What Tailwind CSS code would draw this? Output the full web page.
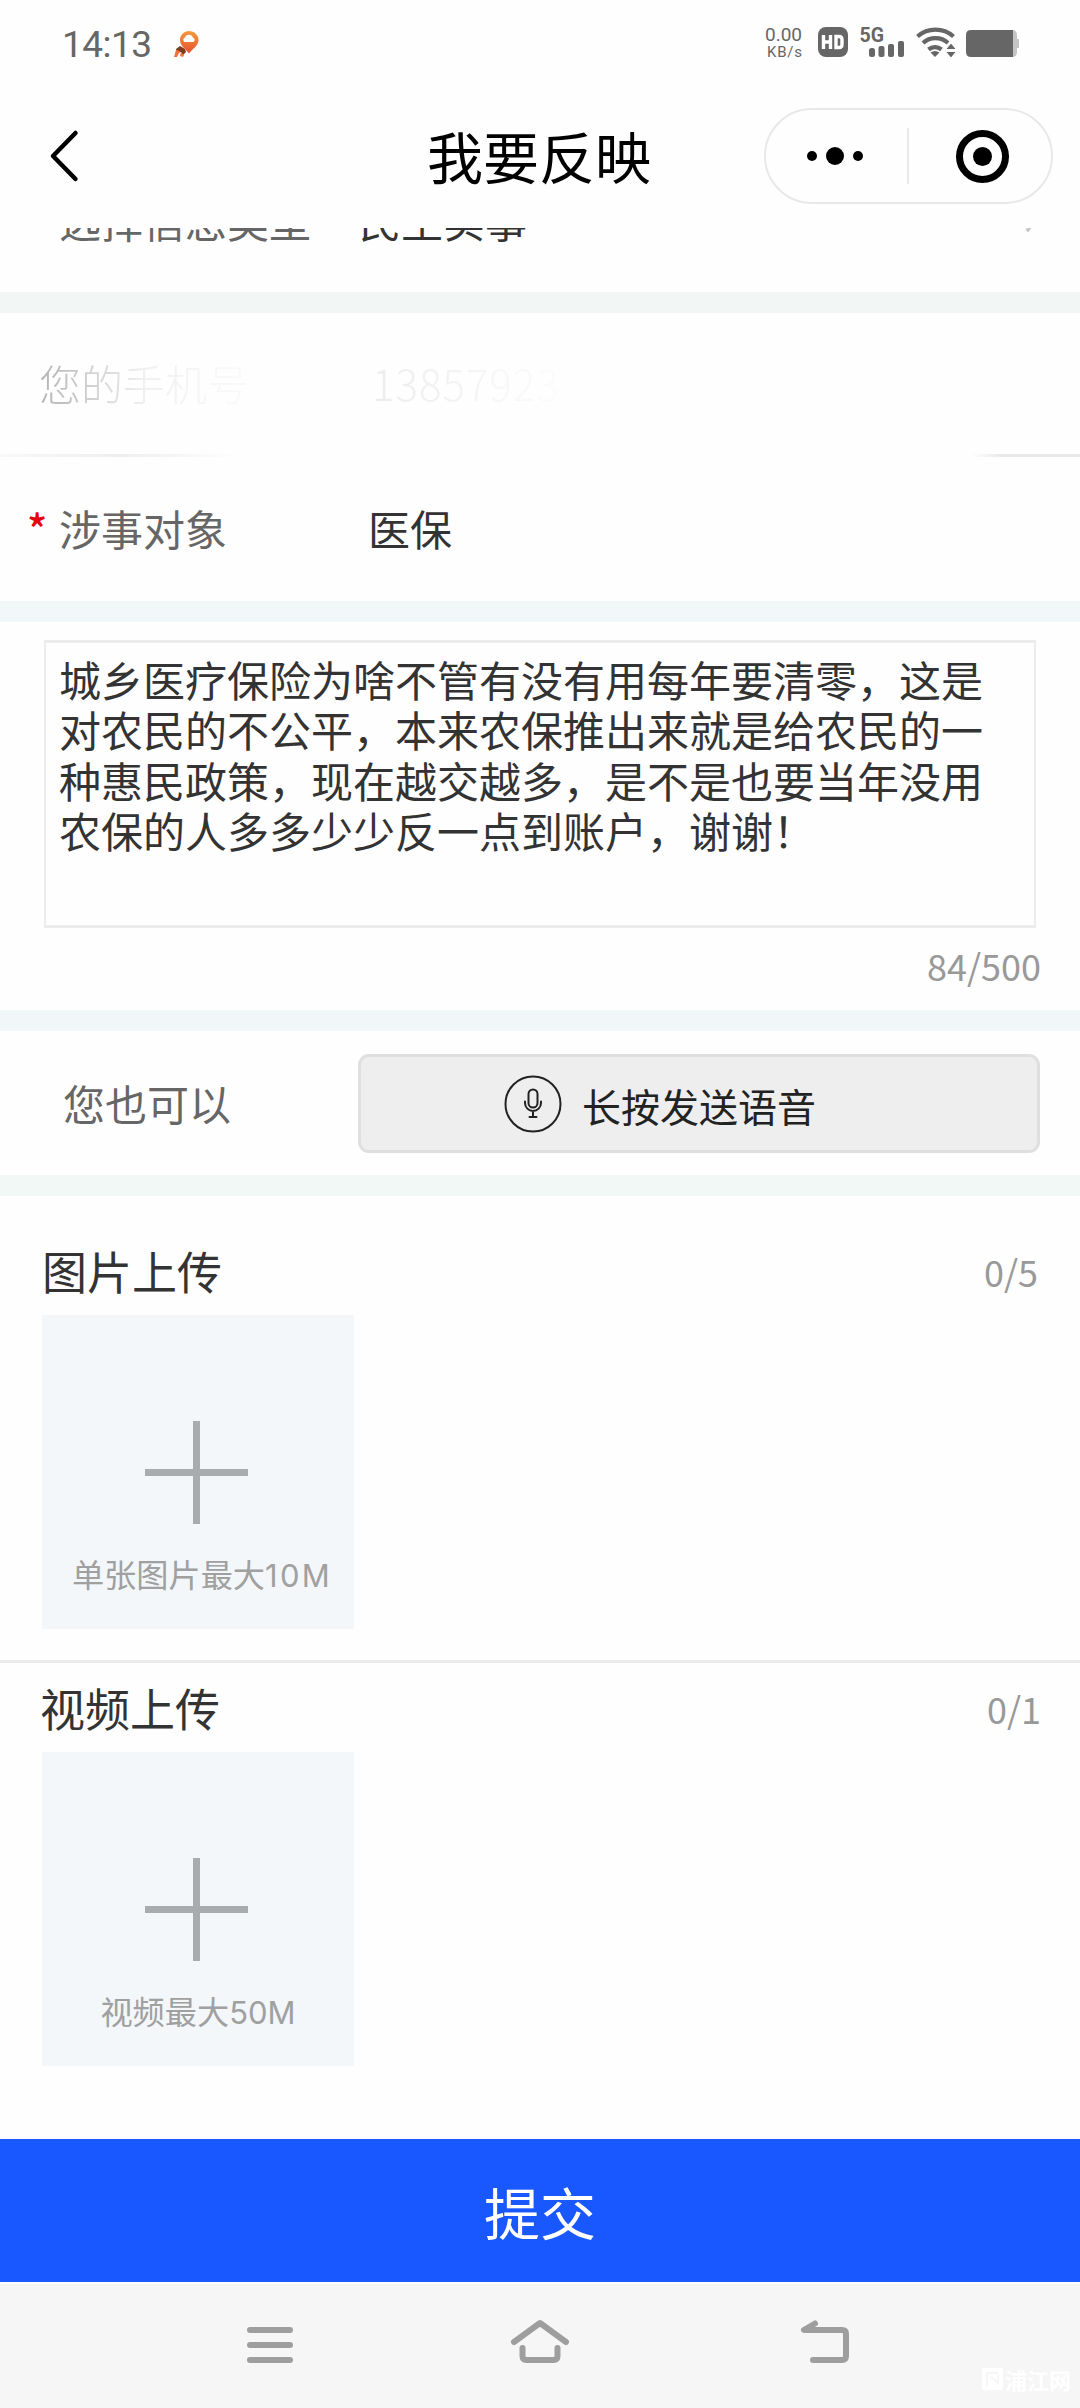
<!DOCTYPE html>
<html lang="zh-CN">
<head>
<meta charset="utf-8">
<title>我要反映</title>
<script src="https://cdn.jsdelivr.net/npm/@tailwindcss/browser@4"></script>
</head>
<body class="w-[1080px] h-[2408px] overflow-hidden bg-[#fefefe] font-['Noto_Sans_CJK_SC',sans-serif] text-[42px] leading-[50px] text-[#333]">
<div class="flex flex-col h-full">

  <!-- status bar -->
  <div class="h-[84px] shrink-0 flex items-start justify-between pl-[62px] pr-[59px] text-[#666]">
    <div class="flex pt-[23px]">
      <span class="font-[Roboto,sans-serif] text-[37px] leading-[44px] w-[110px] tracking-[-0.5px]">14:13</span>
      <svg class="mt-[5px]" width="30" height="34" viewBox="172 28 30 34">
        <defs><linearGradient id="pin" x1="0" y1="0" x2="0" y2="1"><stop offset="0" stop-color="#f59a3c"/><stop offset="1" stop-color="#e5502f"/></linearGradient></defs>
        <path d="M189 31c5.300 0 9.500 4 9.500 9 0 6-6 8.500-9.500 13.500-3.500-5-9-7.500-9-13.500 0-5 4-9 9-9z" fill="url(#pin)"/>
        <path d="M184.500 42a2.500 2.500 0 0 1 .5-4.500 4.200 4.200 0 0 1 8 .2 2.300 2.300 0 0 1 .4 4.300z" fill="#fff"/>
        <path d="M176 49l4-3 5 3 1 3-3 3-2-3-4 1z" fill="#7d3a1c"/>
        <path d="M174 57l2-7 4 1-3 6zM180 56l1-4 3 3-1 2z" fill="#f0723a"/>
      </svg>
    </div>
    <div class="flex items-start pt-[24px] font-[Roboto,sans-serif]">
      <div class="w-[52px] flex flex-col items-start">
        <span class="text-[19px] leading-[22px]">0.00</span>
        <span class="text-[15px] leading-[18px] -mt-[3px] pl-[2px] tracking-[0.8px]">KB/s</span>
      </div>
      <svg class="mt-[3px]" width="204" height="31" viewBox="818 27 204 31" fill="#666">
        <rect x="819" y="27" width="30" height="30" rx="8"/>
        <path d="M824.500 35v14M831.500 35v14M824.500 42h7M837 36.500v11h3q3 0 3-3v-5q0-3-3-3z" fill="none" stroke="#fff" stroke-width="3.400"/>
        <text x="860.500" y="42" font-family="Roboto" font-weight="700" font-size="19.500" textLength="24.500" lengthAdjust="spacingAndGlyphs">5G</text>
        <rect x="870" y="48" width="6" height="9" rx="2.500"/><rect x="879.500" y="46" width="6" height="11" rx="2"/><rect x="889" y="44" width="6" height="13" rx="2"/><rect x="899" y="41" width="6" height="16" rx="2"/>
        <g fill="none" stroke="#666" stroke-width="4.300">
          <path d="M918.500 36.500a27 27 0 0 1 36 0M924 43a18.500 18.500 0 0 1 25 0M929.500 49.500a10.500 10.500 0 0 1 13 0"/>
        </g>
        <path d="M936 57l-4.500-4.500q4.500-3 9 0z"/>
        <path d="M946.500 49.500l5.500-6.500 5.500 6.500zM946.500 51.500h11l-5.500 6.500z" stroke="#fff" stroke-width="1"/>
        <path d="M1010 30h3q5 0 5 5v4h2v9h-2v4q0 5-5 5h-3z" fill="#c4c4c4"/>
        <path d="M972 30h42v27h-42q-5 0-5-5v-17q0-5 5-5z"/>
      </svg>
    </div>
  </div>

  <!-- title bar -->
  <div class="h-[144px] shrink-0 grid grid-cols-[427px_1fr_316px] items-start">
    <svg class="ml-[48px] mt-[44px]" width="32" height="56" viewBox="48 128 32 56" fill="none" stroke="#000" stroke-width="4.500" stroke-linecap="round" stroke-linejoin="round"><path d="M75.500 133L53 156l22.500 23"/></svg>
    <h1 class="text-[56px] leading-[64px] pt-[39px] text-black">我要反映</h1>
    <div class="mt-[24px] w-[289px] h-[96px] rounded-[48px] border-2 border-[#e8e8e8] flex items-center">
      <svg width="285" height="60" viewBox="766 126 285 60">
        <circle cx="812" cy="156" r="5"/><circle cx="835" cy="156" r="9"/><circle cx="858" cy="156" r="5"/>
        <path d="M908 128v56" stroke="#e2e2e2" stroke-width="1.500"/>
        <circle cx="982.500" cy="156.500" r="23" fill="none" stroke="#000" stroke-width="7"/><circle cx="982.500" cy="156.500" r="9.500"/>
      </svg>
    </div>
  </div>

  <!-- message type row, scrolled under the title bar -->
  <div class="h-[64px] shrink-0 overflow-hidden flex justify-between">
    <div class="flex -mt-[33px]">
      <span class="w-[359px] pl-[59px] text-[#666]">选择信息类型</span>
      <span>民生实事</span>
    </div>
    <svg class="mr-[46px]" width="10" height="6" viewBox="0 0 10 6"><path d="M2 1l5-1-3 4z" fill="#bbb" stroke="#ccc"/></svg>
  </div>
  <div class="h-[21px] shrink-0 bg-[#f2f7f6]"></div>

  <!-- phone row -->
  <div class="h-[141px] shrink-0 flex items-start pt-[45px] pl-[39px]">
    <span class="w-[333px]"><span class="bg-linear-to-r from-[#b4b4b4] via-[#f0f0f0] to-[#fafafa] bg-clip-text text-transparent font-light">您的手机号</span></span>
    <span class="bg-linear-to-r from-[#ececec] to-[#fcfcfc] bg-clip-text text-transparent font-light tracking-[1px]">13857923</span>
  </div>
  <div class="h-[3px] shrink-0 flex justify-between">
    <div class="w-[240px] bg-linear-to-r from-[#f8f8f8] via-[#eeeeee] to-[#fefefe]"></div>
    <div class="w-[110px] bg-linear-to-r from-[#fefefe] to-[#e8e8e8] to-30%"></div>
  </div>

  <!-- subject row -->
  <div class="h-[144px] shrink-0 flex items-start pt-[46px] pl-[27px]">
    <span class="w-[32px] font-medium text-[#e60012]">*</span>
    <span class="w-[309px] text-[#666]">涉事对象</span>
    <span>医保</span>
  </div>
  <div class="h-[21px] shrink-0 bg-linear-to-b from-[#f2f7f6] to-[#f1f7fa]"></div>

  <!-- content -->
  <div class="h-[388px] shrink-0 pt-[18px] flex flex-col">
    <div class="ml-[44px] w-[992px] h-[288px] border-x-2 border-y-3 border-[#ececec] pl-[13px] pt-[11px] leading-[50.400px] whitespace-nowrap">城乡医疗保险为啥不管有没有用每年要清零，这是<br>对农民的不公平，本来农保推出来就是给农民的一<br>种惠民政策，现在越交越多，是不是也要当年没用<br>农保的人多多少少反一点到账户，谢谢！</div>
    <div class="pt-[12px] pr-[39px] text-right text-[36px] text-[#999]">84/500</div>
  </div>
  <div class="h-[21px] shrink-0 bg-[#f1f7f9]"></div>

  <!-- voice -->
  <div class="h-[144px] shrink-0 flex items-start pt-[23px] pl-[63px]">
    <span class="w-[295px] pt-[24px] text-[#666]">您也可以</span>
    <div class="w-[682px] h-[99px] rounded-[11px] border-3 border-[#dfdfdf] bg-[#eeeeee] flex items-center pl-[142px] gap-[19px] text-[39px] text-[#222]">
      <svg width="60" height="60" viewBox="503 1074 60 60" fill="none" stroke="#222" stroke-width="2" stroke-linecap="round">
        <circle cx="533" cy="1104" r="27.500"/>
        <rect x="528.500" y="1089.500" width="9" height="18" rx="4.500"/>
        <path d="M525 1101.500v1.500a8 8 0 0 0 16 0v-1.500M533 1111v6M529.500 1117h7"/>
      </svg>
      <span class="pt-[2px]">长按发送语音</span>
    </div>
  </div>
  <div class="h-[21px] shrink-0 bg-[#f1f8f6]"></div>

  <!-- picture upload -->
  <div class="h-[464px] shrink-0 flex flex-col">
    <div class="h-[119px] shrink-0 flex items-start justify-between pt-[50px] pl-[42px] pr-[42px]">
      <span class="text-[45px]">图片上传</span><span class="text-[36px] text-[#999]">0/5</span>
    </div>
    <div class="ml-[42px] w-[312px] h-[314px] bg-[#f3f7fa] flex flex-col items-center pt-[106px]">
      <svg class="mr-[3px]" width="103" height="103" viewBox="0 0 103 103"><path d="M51.500 0v103M0 51.500h103" stroke="#a9acae" stroke-width="7"/></svg>
      <span class="pt-[24px] ml-[8px] text-[32.200px] text-[#a0a0a0] whitespace-nowrap">单张图片最大<span class="font-[Inter] text-[31px] tracking-[2.300px]">10M</span></span>
    </div>
  </div>
  <div class="h-[3px] shrink-0 bg-[#ebebeb]"></div>

  <!-- video upload -->
  <div class="h-[476px] shrink-0 flex flex-col">
    <div class="h-[89px] shrink-0 flex items-start justify-between pt-[20px] pl-[40px] pr-[39px]">
      <span class="text-[45px]">视频上传</span><span class="text-[36px] text-[#999]">0/1</span>
    </div>
    <div class="ml-[42px] w-[312px] h-[314px] bg-[#f3f7fa] flex flex-col items-center pt-[106px]">
      <svg class="mr-[3px]" width="103" height="103" viewBox="0 0 103 103"><path d="M51.500 0v103M0 51.500h103" stroke="#a9acae" stroke-width="7"/></svg>
      <span class="pt-[24px] text-[32.200px] text-[#a0a0a0] whitespace-nowrap">视频最大<span class="font-[Inter] text-[31px]">50M</span></span>
    </div>
  </div>

  <div class="h-[143px] shrink-0 bg-[#1957ff] text-white text-[56px] flex items-center justify-center">提交</div>

  <!-- system navigation -->
  <div class="h-[126px] shrink-0 bg-[#f6f6f6] border-t-2 border-white relative">
    <svg width="1080" height="124" viewBox="0 2284 1080 124" fill="none" stroke="#9e9e9e" stroke-width="6" stroke-linecap="round" stroke-linejoin="round">
      <path d="M250 2330h40M250 2345h40M250 2360h40"/>
      <path d="M514 2342l26-19 26 19M522.500 2348v8q0 4 4 4h27q4 0 4-4v-8"/>
      <path d="M815 2323.500L804 2330h38q4 0 4 4v22q0 4-4 4h-29"/>
    </svg>
    <div class="absolute left-[982px] top-[82px] flex items-center gap-[2px] text-white text-[22px] leading-[26px] font-bold">
      <svg width="21" height="22" viewBox="0 0 21 22"><rect width="21" height="22" rx="2" fill="#fff"/><path d="M5 18V5h11M9 9l7 6v-8" fill="none" stroke="#f6f6f6" stroke-width="2"/></svg>
      <span>浦江网</span>
    </div>
  </div>
</div>
</body>
</html>
